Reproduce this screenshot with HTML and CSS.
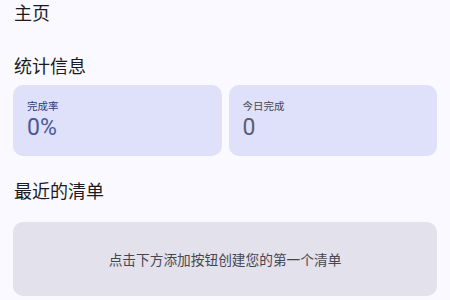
FILE: index.html
```html
<!DOCTYPE html>
<html lang="zh-CN">
  <head>
    <meta charset="UTF-8" />
    <meta name="viewport" content="width=device-width, initial-scale=1.0" />
    <title>主页</title>

    <link rel="stylesheet" href="styles.css">
  </head>
  <body>
    <h1 class="page-title">主页</h1>

    <h2 class="section-title stats-title">统计信息</h2>

    <div class="stats">
      <div class="stat-card">
        <p class="stat-label primary">完成率</p>
        <p class="stat-value primary">0%</p>
      </div>

      <div class="stat-card">
        <p class="stat-label">今日完成</p>
        <p class="stat-value">0</p>
      </div>
    </div>

    <h2 class="section-title recent-title">最近的清单</h2>

    <div class="empty-box">
      <p>点击下方添加按钮创建您的第一个清单</p>
    </div>
  </body>
</html>
```

FILE: styles.css
```css
* {
  margin: 0;
  padding: 0;
  box-sizing: border-box;
}

body {
  background-color: #f9f9ff;
  color: #1b1b21;
  font-family: Roboto, "Noto Sans CJK SC", sans-serif;
  padding: 0 13px;
  height: 300px;
  overflow: hidden;
}

.page-title {
  font-size: 18px;
  font-weight: 400;
  line-height: 26px;
  padding-top: 1px;
  padding-left: 1px;
}

.section-title {
  font-size: 18px;
  font-weight: 400;
  line-height: 26px;
  padding-left: 1px;
}

.stats-title {
  margin-top: 27px;
}

.stats {
  display: flex;
  gap: 7px;
  margin-top: 5px;
}

.stat-card {
  flex: 1;
  height: 71px;
  background-color: #dee1f9;
  border-radius: 10px;
  padding: 15px 14px 0;
}

.stat-label {
  font-size: 10.5px;
  line-height: 14px;
  color: #45464f;
}

.stat-value {
  font-size: 23px;
  line-height: 28px;
  color: #5b5d72;
}

.stat-label.primary {
  color: #2f3b78;
}

.stat-value.primary {
  color: #4a5899;
}

.recent-title {
  margin-top: 23px;
}

.empty-box {
  margin-top: 17px;
  height: 74px;
  background-color: #e2e1ec;
  border-radius: 10px;
  display: flex;
  align-items: center;
  justify-content: center;
}

.empty-box p {
  font-size: 13.7px;
  color: #46464f;
}
```
